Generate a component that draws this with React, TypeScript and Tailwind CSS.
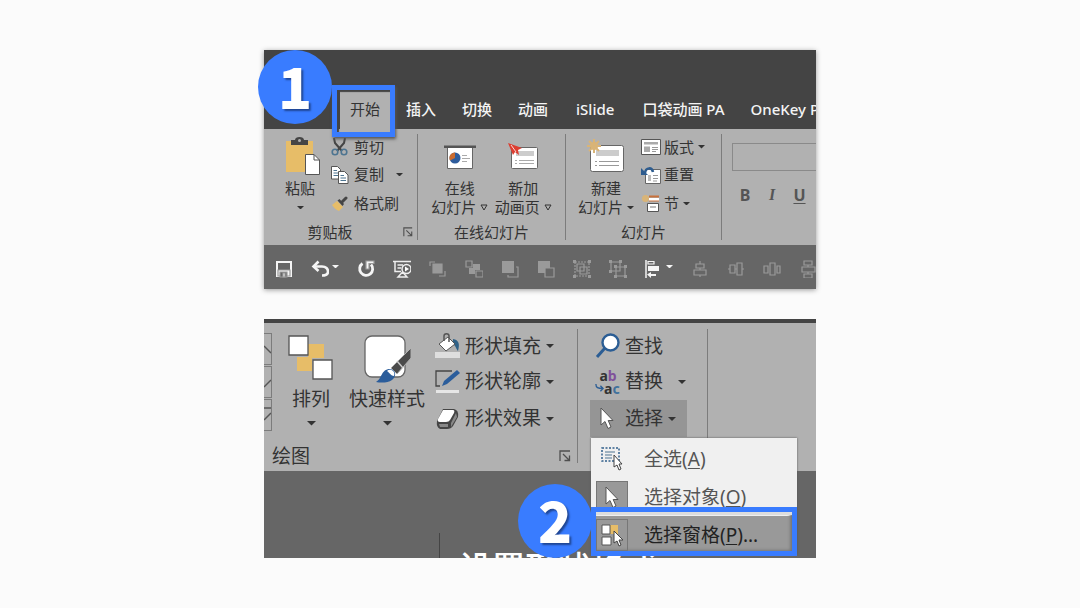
import React from "react";
import clsx from "clsx";

const Caret = ({ className = "w-[7px]" }: { className?: string }) => (
  <svg viewBox="0 0 8 4" className={clsx("shrink-0", className)} fill="currentColor" aria-hidden="true">
    <path d="M0 0H8L4 4Z" />
  </svg>
);

const HollowCaret = () => (
  <svg viewBox="0 0 8 7" className="w-[8px] shrink-0" fill="none" stroke="currentColor" aria-hidden="true">
    <path d="M1 1H7L4 6Z" />
  </svg>
);

const Launcher = ({ label, className = "w-[10px]" }: { label: string; className?: string }) => (
  <button type="button" aria-label={label} className="text-[#4f4f4f]">
    <svg viewBox="0 0 12 12" className={className} fill="none" stroke="currentColor" strokeWidth="1.3">
      <path d="M1 11V1H11M4 4L10 10M10.5 5.5V10.5H5.5" />
    </svg>
  </button>
);

const Pointer = ({ className }: { className: string }) => (
  <svg viewBox="0 0 14 23" className={className} aria-hidden="true">
    <path d="M1 1V18L5 14.5L8 21.5L11 20L8.2 13.5H13Z" fill="#fff" stroke="#555" />
  </svg>
);

/* ---------- ribbon icons, small panel ---------- */

const PasteIcon = () => (
  <svg viewBox="0 0 34 39" className="w-[34px] h-[39px]" aria-hidden="true">
    <path d="M0 4H27V35H0Z" fill="#e7bd68" />
    <path d="M5 8V3H9C9 1 11 0 13.5 0S18 1 18 3H22V8Z" fill="#454545" />
    <circle cx="13.5" cy="3.5" r="1.5" fill="#b1b1b1" />
    <path d="M19.5 17.5H28L33.5 23V37.5H19.5Z" fill="#fff" stroke="#555" />
    <path d="M28 17.5V23H33.5" fill="none" stroke="#555" />
  </svg>
);

const CutIcon = () => (
  <svg viewBox="0 0 17 18" className="w-[17px] h-[18px]" fill="none" aria-hidden="true">
    <path d="M3 0L4 5L11 13M14 0L13 5L6 13" stroke="#454545" strokeWidth="2" />
    <circle cx="4" cy="14" r="2.8" stroke="#4e7591" strokeWidth="1.6" />
    <circle cx="13" cy="14" r="2.8" stroke="#4e7591" strokeWidth="1.6" />
  </svg>
);

const CopyIcon = () => (
  <svg viewBox="0 0 18 18" className="w-[18px] h-[18px]" fill="#fff" stroke="#555" aria-hidden="true">
    <path d="M.5 .5H6.5L9.5 3.5V13H.5Z" />
    <path d="M2.5 4.5H6M2.5 7H7M2.5 9.5H7" stroke="#4e7591" />
    <path d="M7.5 5.5H13.5L17 9V17.5H7.5Z" />
    <path d="M9.5 9.5H13M9.5 12H15M9.5 14.5H15" stroke="#4e7591" />
  </svg>
);

const BrushIcon = () => (
  <svg viewBox="0 0 17 16" className="w-[17px] h-[16px]" aria-hidden="true">
    <path d="M1 9L6 5L12 11L8 15C5 14 3 12 1 9Z" fill="#e7bd68" />
    <path d="M6.5 4.5L8.5 3L13 8L11.5 10Z" fill="#454545" />
    <path d="M11 6L15 2" stroke="#454545" strokeWidth="3" strokeLinecap="round" />
  </svg>
);

const OnlineSlideIcon = () => (
  <svg viewBox="0 0 32 28" className="w-[32px] h-[28px]" aria-hidden="true">
    <path d="M3.5 4H28.5V25.5H3.5Z" fill="#fff" stroke="#666" />
    <path d="M0 2.5H32V5H0Z" fill="#555" />
    <circle cx="11" cy="15" r="5.5" fill="#2d5c9c" />
    <path d="M11 15L11 9.5A5.5 5.5 0 0 0 6 17.5Z" fill="#ca6b2e" />
    <path d="M18 12.5H23M18 15.5H26M18 18.5H23" stroke="#aaa" />
  </svg>
);

const AnimPageIcon = () => (
  <svg viewBox="0 0 31 28" className="w-[31px] h-[28px]" aria-hidden="true">
    <rect x="3.5" y="4.5" width="26" height="21" rx="1" fill="#fff" stroke="#666" />
    <path d="M8 8H26V13H8Z" fill="#ccc" />
    <path d="M7 17.5H9M11 17.5H26M7 20.5H9M11 20.5H26" stroke="#aaa" />
    <path d="M0 0L14 5L10 7L11 12L7 9L5 12Z" fill="#dc3e31" />
    <path d="M3 2L8 9" stroke="#fff" strokeWidth=".8" />
  </svg>
);

const NewSlideIcon = () => (
  <svg viewBox="0 0 38 35" className="w-[38px] h-[35px]" aria-hidden="true">
    <rect x="3.5" y="6.5" width="33" height="26" rx="2" fill="#fff" stroke="#666" />
    <path d="M9 11H32V17H9Z" fill="#ccc" />
    <path d="M8 22.5H10M12 22.5H32M8 26.5H10M12 26.5H32" stroke="#999" />
    <path d="M7 0V14M0 7H14M2 2L12 12M12 2L2 12" stroke="#d9b477" strokeWidth="2" />
    <circle cx="7" cy="7" r="4" fill="#d9b477" />
  </svg>
);

const LayoutIcon = () => (
  <svg viewBox="0 0 20 16" className="w-[20px] h-[16px]" aria-hidden="true">
    <path d="M.5 .5H19.5V15.5H.5Z" fill="#fff" stroke="#555" />
    <path d="M3 3H17V5.5H3ZM3 7.5H9V13H3Z" fill="#aaa" />
    <path d="M11 8.5H17M11 10.5H17M11 12.5H15" stroke="#999" />
  </svg>
);

const ResetIcon = () => (
  <svg viewBox="0 0 20 18" className="w-[20px] h-[18px]" aria-hidden="true">
    <path d="M4.5 3.5H19.5V17.5H4.5Z" fill="#fff" stroke="#666" />
    <path d="M7 9H10V15H7Z" fill="#bbb" />
    <path d="M12 9.5H17M12 12.5H17M12 15H16" stroke="#999" />
    <path d="M12 6C11 1 5 1 4 7" fill="none" stroke="#2d5c8f" strokeWidth="2.5" />
    <path d="M0 2V9H7Z" fill="#2d5c8f" />
  </svg>
);

const SectionIcon = () => (
  <svg viewBox="0 0 20 17" className="w-[20px] h-[17px]" aria-hidden="true">
    <path d="M8 1.5H18" stroke="#c9713b" strokeWidth="2" />
    <path d="M8 3H18V6H8Z" fill="#fff" />
    <path d="M8 6H18" stroke="#c9713b" />
    <circle cx="4.5" cy="3.5" r="3.5" fill="#d9b477" />
    <path d="M6.5 8.5H17.5V16.5H6.5Z" fill="#fff" stroke="#555" />
    <path d="M9 11H15V13H9Z" fill="#bbb" />
  </svg>
);

/* ---------- quick access icons ---------- */

const SaveIcon = () => (
  <g>
    <path d="M2 2H16V16H2Z" fill="none" stroke="#f5f5f5" strokeWidth="2" />
    <path d="M3 10H15V16H3Z" fill="#f5f5f5" />
    <path d="M5 12H12V17H5Z" fill="#666" />
    <path d="M8 13H10V17H8Z" fill="#f5f5f5" />
  </g>
);

const UndoIcon = () => (
  <g fill="none" stroke="#f5f5f5" strokeWidth="2.6">
    <path d="M2 6.500H11C15 6.500 17 9 17 11.500S15 15.500 11 15.500" />
    <path d="M7.500 1.500L2.500 6.500L7.500 11" />
  </g>
);

const RedoIcon = () => (
  <g>
    <path d="M5.5 3.5A6.5 6.5 0 1 0 14 4.5" fill="none" stroke="#f5f5f5" strokeWidth="2.8" />
    <path d="M9 1H17V3.500H12V9H9Z" fill="#f5f5f5" />
  </g>
);

const PresentIcon = () => (
  <g fill="none" stroke="#eee" strokeWidth="1.5">
    <path d="M0 1.5H18M2 2V11.5H8M4.5 5H10M4.5 8H8M5 17H14L9.5 12Z" />
    <circle cx="13.5" cy="9" r="4.5" fill="#666" />
    <path d="M12 6.5V11.5L16 9Z" fill="#fff" stroke="none" />
  </g>
);

const dim = "#9a9a9a";

const disabledIcons: { label: string; art: React.ReactNode }[] = [
  { label: "上移一层", art: <><path d="M4 4H13V13H4Z" fill={dim} /><path d="M1 6V2H6M16 11V16H10" /></> },
  { label: "置于顶层", art: <><path d="M8 4H15V10H8ZM4 8H10V14H4Z" fill={dim} stroke="none" /><path d="M1 1H7V7H1ZM11 11H18V17H11Z" fill="#666" /></> },
  { label: "下移一层", art: <><path d="M1 1H13V13H1Z" fill={dim} stroke="none" /><path d="M15 7H17V17H7V15" /></> },
  { label: "置于底层", art: <><path d="M1 1H13V13H1Z" fill={dim} stroke="none" /><path d="M8 8H17V17H8Z" fill="#666" /></> },
  { label: "组合", art: <><path d="M2 2H16V16H2Z" strokeDasharray="2 1" /><path d="M4 4H11V11H4ZM7 7H14V14H7Z" /><path d="M0 0H3V3H0ZM15 0H18V3H15ZM0 15H3V18H0ZM15 15H18V18H15Z" fill={dim} stroke="none" /></> },
  { label: "取消组合", art: <><path d="M2 2H11V11H2ZM7 7H16V16H7Z" /><path d="M0 0H3V3H0ZM10 0H13V3H10ZM0 10H3V13H0ZM5 5H8V8H5ZM15 5H18V8H15ZM5 15H8V18H5ZM15 15H18V18H15Z" fill={dim} stroke="none" /></> },
];

const alignIcons: { label: string; art: React.ReactNode }[] = [
  { label: "水平居中", art: <path d="M9 1V4M5 4H13V8H5ZM9 8V10M3 10H15V15H3ZM9 15V17" /> },
  { label: "垂直居中", art: <path d="M1 9H3M3 5H8V13H3ZM8 9H10M10 3H15V15H10ZM15 9H17" /> },
  { label: "横向分布", art: <path d="M1 6H5V13H1ZM7 3H12V15H7ZM14 6H17V13H14Z" /> },
  { label: "纵向分布", art: <path d="M5 1H13V5H5ZM9 5V7M3 7H16V12H3ZM9 12V14M5 14H13V18H5Z" /> },
];

const QuickButton = ({ label, caret, children }: { label: string; caret?: boolean; children: React.ReactNode }) => (
  <button
    type="button"
    aria-label={label}
    className={clsx("flex shrink-0 items-center justify-between text-[#f5f5f5]", caret ? "w-[28px]" : "w-[18px]")}
  >
    <svg viewBox="0 0 18 18" className="size-[18px]" fill="none" stroke={dim} strokeWidth="1.2">
      {children}
    </svg>
    {caret && <Caret className="mb-[4px] w-[7px]" />}
  </button>
);

/* ---------- large panel icons ---------- */

const ArrangeIcon = () => (
  <svg viewBox="0 0 46 46" className="w-[46px] h-[46px]" aria-hidden="true">
    <path d="M20 9H36V23H20ZM9 22H24V36H9Z" fill="#e7bd68" />
    <path d="M1 1H20V20H1ZM25 25H44V44H25Z" fill="#fff" stroke="#555" strokeWidth="1.3" />
  </svg>
);

const QuickStyleIcon = () => (
  <svg viewBox="0 0 48 48" className="w-[48px] h-[48px]" aria-hidden="true">
    <rect x="2" y="1" width="40" height="41" rx="7" fill="#fff" stroke="#666" strokeWidth="1.3" />
    <path d="M48 13V23L34 39L28 33Z" fill="#4a4a4a" stroke="#b1b1b1" />
    <path d="M34 26L40 33" stroke="#ccc" strokeWidth="1.5" />
    <path d="M13 47C19 44 18 34 27 34C33 35 34 41 29 45C25 48 18 48 13 47Z" fill="#2b5d9b" />
    <path d="M24 36C27 33 33 36 31 41C28 41 27 38 24 36Z" fill="#fff" />
  </svg>
);

const FillIcon = () => (
  <svg viewBox="0 0 26 26" className="w-[26px] h-[26px]" aria-hidden="true">
    <path d="M0 19H25V25H0Z" fill="#dedede" />
    <path d="M18 6C24 7 25 11 23 18C21 16 21 13 18 11Z" fill="#2f6187" />
    <path d="M4 11L13 4L20 11L11 18Z" fill="#fff" stroke="#555" />
    <path d="M9 8V3C9 0 14 0 14 3V9" fill="none" stroke="#555" strokeWidth="1.5" />
  </svg>
);

const OutlineIcon = () => (
  <svg viewBox="0 0 26 26" className="w-[26px] h-[26px]" aria-hidden="true">
    <path d="M1 21H24V24H1Z" fill="#e6e6e6" />
    <path d="M17 2H1V17H5" fill="none" stroke="#454545" strokeWidth="1.3" />
    <path d="M22 1L25 4L12 15L7 17L9 12Z" fill="#2b5d9b" />
  </svg>
);

const EffectIcon = () => (
  <svg viewBox="0 0 26 26" className="w-[26px] h-[26px]" aria-hidden="true">
    <path d="M8 3H19Q24 4 23 11L18 20Q16 23 12 23H5Q1 21 2 15Z" fill="#454545" />
    <path d="M8 4H18Q20 4 19 7L15 14Q14 16 11 16H5Q2 16 3 13Z" fill="#fff" />
    <path d="M21 7L16 17V21L22 11Z" fill="#888" />
    <path d="M4 18H13V21H5Z" fill="#888" />
  </svg>
);

const FindIcon = () => (
  <svg viewBox="0 0 26 26" className="w-[26px] h-[26px]" fill="none" stroke="#2b5d94" aria-hidden="true">
    <circle cx="15.5" cy="9.5" r="8" fill="#fff" strokeWidth="2.4" />
    <path d="M10 15L2 24" strokeWidth="3" />
  </svg>
);

const ReplaceIcon = () => (
  <span className="flex w-[26px] flex-col text-[14px] leading-[13px] font-bold text-[#333]" aria-hidden="true">
    <span>a<span className="text-[#80519b]">b</span></span>
    <span className="flex">
      <svg viewBox="0 0 10 10" className="w-[9px] shrink-0" fill="none" stroke="#2b5d94" strokeWidth="1.5">
        <path d="M1 0C1 4 3 5 9 5M6 2L9 5L6 8" />
      </svg>
      a<span className="text-[#3f719d]">c</span>
    </span>
  </span>
);

const SelectAllIcon = () => (
  <svg viewBox="0 0 24 24" className="w-[24px] h-[24px]" aria-hidden="true">
    <path d="M2 1H19V14H2Z" fill="none" stroke="#315f8b" strokeWidth="1.5" strokeDasharray="2 1.5" />
    <path d="M5 5H15M5 8H12M5 11H12" stroke="#4e7591" />
    <path d="M14 8V20L17 18L19 23L21 22L19 17H22Z" fill="#fff" stroke="#444" />
  </svg>
);

const PaneIcon = () => (
  <svg viewBox="0 0 24 24" className="w-[24px] h-[24px]" aria-hidden="true">
    <path d="M9 2H18V11H9Z" fill="#e7bd68" />
    <path d="M2 2H10V11H2ZM2 14H11V22H2Z" fill="#fff" stroke="#555" />
    <path d="M14 8V20L17 18L19 23L21 22L19 17H23Z" fill="#fff" stroke="#444" />
  </svg>
);

/* ---------- building blocks ---------- */

const Badge = ({ children, className }: { children: React.ReactNode; className: string }) => (
  <span
    className={clsx(
      "absolute z-20 flex size-[74px] items-center justify-center rounded-full bg-[#397cff] pb-[4px] font-['Noto_Sans_CJK_SC',sans-serif] text-[56px] leading-[56px] font-black text-white text-shadow-[2px_2px_2px_#1f4694]",
      className
    )}
  >
    {children}
  </span>
);

const Group = ({ label, className, children, launcher }: { label?: string; className?: string; children: React.ReactNode; launcher?: string }) => (
  <section className="flex shrink-0 flex-col border-r border-[#7c7c7c] last:border-r-0">
    <div className={clsx("flex flex-1", className)}>{children}</div>
    {label && (
      <footer className={clsx("relative flex h-[16px] items-center justify-center text-[15px]", launcher && "pr-[21px]")}>
        {label}
        {launcher && (
          <span className="absolute right-[4px] flex items-center">
            <Launcher label={launcher} />
          </span>
        )}
      </footer>
    )}
  </section>
);

const BigButton = ({ icon, lines, caret, className }: { icon: React.ReactNode; lines: string[]; caret: React.ReactNode; className?: string }) => (
  <button type="button" className={clsx("flex flex-col items-center self-start text-[15px] leading-[19px]", className)}>
    <span className="flex h-[45px] items-center">{icon}</span>
    <span>{lines[0]}</span>
    <span className="flex h-[19px] items-center gap-[4px] whitespace-nowrap">
      {lines[1]}
      {caret}
    </span>
  </button>
);

const SmallButton = ({ icon, label, caret, wide }: { icon: React.ReactNode; label: string; caret?: boolean; wide?: boolean }) => (
  <button type="button" className="flex h-[29px] items-center text-[15px] whitespace-nowrap first:h-[26px]">
    <span className="flex w-[23px]">{icon}</span>
    {label}
    {caret && <Caret className={wide ? "ml-[12px] w-[7px]" : "ml-[4px] w-[7px]"} />}
  </button>
);

const tabs = ["插入", "切换", "动画", "iSlide", "口袋动画 PA", "OneKey Plus"];

const HomePanel = () => (
  <section className="relative">
    <div className="overflow-hidden bg-[#b1b1b1] shadow-[0_1px_5px_#999]">
      <nav className="flex h-[79px] items-end bg-[#444] pl-[76px]">
        <button type="button" className="h-[40px] shrink-0 bg-[#b1b1b1] pr-[13px] pl-[10px] text-[15px] whitespace-nowrap text-[#333]">
          开始
        </button>
        {tabs.map((tab) => (
          <button
            key={tab}
            type="button"
            className={clsx(
              "h-[40px] shrink-0 text-[15px] font-medium whitespace-nowrap text-[#f4f4f4]",
              tab === "iSlide" ? "px-[15px]" : "px-[13px]"
            )}
          >
            {tab}
          </button>
        ))}
      </nav>

      <div className="flex h-[116px] py-[5px] text-[#333]">
        <Group label="剪贴板" launcher="剪贴板选项" className="w-[153px] pl-[15px]">
          <BigButton icon={<span className="pl-[5px]"><PasteIcon /></span>} lines={["粘贴", ""]} caret={<Caret />} className="w-[42px]" />
          <div className="ml-[10px] flex flex-col">
            <SmallButton icon={<CutIcon />} label="剪切" />
            <SmallButton icon={<CopyIcon />} label="复制" caret wide />
            <SmallButton icon={<BrushIcon />} label="格式刷" />
          </div>
        </Group>
        <Group label="在线幻灯片" className="w-[147px] px-[10px]">
          <BigButton icon={<OnlineSlideIcon />} lines={["在线", "幻灯片"]} caret={<HollowCaret />} className="w-[64px]" />
          <BigButton icon={<AnimPageIcon />} lines={["新加", "动画页"]} caret={<HollowCaret />} className="w-[64px]" />
        </Group>
        <Group label="幻灯片" className="w-[155px] px-[11px]">
          <BigButton icon={<NewSlideIcon />} lines={["新建", "幻灯片"]} caret={<Caret />} className="w-[58px]" />
          <div className="ml-[6px] flex flex-col">
            <SmallButton icon={<LayoutIcon />} label="版式" caret />
            <SmallButton icon={<ResetIcon />} label="重置" />
            <SmallButton icon={<SectionIcon />} label="节" caret />
          </div>
        </Group>
        <Group className="pt-[9px] pl-[10px]">
          <div className="flex flex-col">
            <input aria-label="字体" className="h-[28px] w-[140px] border border-[#8a8a8a] bg-transparent px-2 text-[15px]" />
            <div className="flex pt-[13px] text-[16px] leading-[22px] font-bold text-[#555]">
              <button type="button" aria-label="加粗" className="w-[26px]">B</button>
              <button type="button" aria-label="倾斜" className="w-[28px] font-['Liberation_Serif',serif] italic">I</button>
              <button type="button" aria-label="下划线" className="w-[27px] underline underline-offset-2">U</button>
            </div>
          </div>
        </Group>
      </div>

      <div className="flex h-[44px] items-center gap-[18px] bg-[#666] pt-[3px] pl-[11px]" role="toolbar" aria-label="快速访问工具栏">
        <QuickButton label="保存"><SaveIcon /></QuickButton>
        <QuickButton label="撤消" caret><UndoIcon /></QuickButton>
        <QuickButton label="恢复"><RedoIcon /></QuickButton>
        <QuickButton label="从头开始"><PresentIcon /></QuickButton>
        {disabledIcons.map(({ label, art }) => (
          <QuickButton key={label} label={label}>{art}</QuickButton>
        ))}
        <QuickButton label="左对齐" caret>
          <path d="M1 0V18" stroke="#f5f5f5" strokeWidth="1.5" />
          <path d="M3 1.5H9V4H3Z" stroke="#f5f5f5" />
          <path d="M3 6H14V11H3ZM2 14.5L6 12V14H11V16H6V18Z" fill="#f5f5f5" stroke="none" />
        </QuickButton>
        {alignIcons.map(({ label, art }) => (
          <QuickButton key={label} label={label}>{art}</QuickButton>
        ))}
      </div>
    </div>
    <span className="pointer-events-none absolute top-[35px] left-[68px] h-[52px] w-[63px] border-[5px] border-[#397cff] shadow-[1px_2px_3px_#555,inset_2px_2px_1px_#444]" />
    <Badge className="top-0 left-[-6px]">1</Badge>
  </section>
);

const LargeButton = ({ icon, label, className }: { icon: React.ReactNode; label: string; className: string }) => (
  <button type="button" className={clsx("flex shrink-0 flex-col items-center self-start pt-[6px] text-[19px] leading-[24px] whitespace-nowrap", className)}>
    <span className="flex h-[52px] items-start">{icon}</span>
    {label}
    <Caret className="mt-[10px] w-[9px]" />
  </button>
);

const RowButton = ({ icon, label, className, gap = "ml-[5px]" }: { icon: React.ReactNode; label: string; className?: string; gap?: string }) => (
  <button type="button" className={clsx("flex h-[37px] items-center text-[19px] whitespace-nowrap first:h-[34px]", className)}>
    <span className="flex w-[30px]">{icon}</span>
    {label}
    {gap && <Caret className={clsx("w-[8px]", gap)} />}
  </button>
);

const scrollButtons = [
  { label: "上一行", mark: "M0 12L7 19" },
  { label: "下一行", mark: "M0 20L7 13" },
  { label: "其他", mark: "M0 8H7M0 20L7 13" },
];

const MenuItem = ({ icon, label, hotkey, suffix = ")", pressed, className }: { icon: React.ReactNode; label: string; hotkey: string; suffix?: string; pressed?: boolean; className?: string }) => (
  <button
    type="button"
    role="menuitem"
    className={clsx("flex h-[38px] w-full items-center pl-[5px] text-[19px] whitespace-nowrap", className)}
  >
    <span className={clsx("mr-[16px] flex h-[32px] w-[32px] items-center justify-center border", pressed ? "border-[#777] bg-[#999]" : "border-transparent")}>
      {icon}
    </span>
    <span>
      {label}(<u className="underline-offset-2">{hotkey}</u>{suffix}
    </span>
  </button>
);

const SelectMenu = () => (
  <div role="menu" className="absolute top-[119px] left-[327px] z-10 w-[206px] bg-[#f0f0f0] pt-[2px] text-[#555] shadow-[0_0_2px_#555]">
    <MenuItem icon={<SelectAllIcon />} label="全选" hotkey="A" />
    <MenuItem icon={<Pointer className="h-[23px] w-[14px]" />} label="选择对象" hotkey="O" pressed />
    <MenuItem icon={<PaneIcon />} label="选择窗格" hotkey="P" suffix=")..." pressed className="bg-[#999] text-[#222]" />
    <span className="pointer-events-none absolute right-0 bottom-[-2px] left-0 h-[49px] border-[5px] border-[#397cff] shadow-[inset_0_3px_0_#ddd,inset_-2px_-1px_3px_#777]" />
  </div>
);

const DrawingPanel = () => (
  <section className="relative">
    <div className="overflow-hidden bg-[#b1b1b1]">
      <div className="flex h-[152px] border-t-4 border-[#444] pt-[6px] pb-[8px] text-[#333]">
        <section className="flex w-[314px] shrink-0 flex-col border-r border-[#7c7c7c]">
          <div className="flex flex-1">
            <div className="flex w-[8px] flex-col gap-[1px] self-start pt-[4px]">
              {scrollButtons.map(({ label, mark }) => (
                <button key={label} type="button" aria-label={label} className="h-[32px] border border-l-0 border-[#7c7c7c]">
                  <svg viewBox="0 0 7 30" className="h-full w-full" fill="none" stroke="#555" strokeWidth="1.5">
                    <path d={mark} />
                  </svg>
                </button>
              ))}
            </div>
            <LargeButton icon={<ArrangeIcon />} label="排列" className="ml-[14px] w-[50px]" />
            <LargeButton icon={<QuickStyleIcon />} label="快速样式" className="ml-[13px] w-[76px]" />
            <div className="ml-[10px] flex flex-col">
              <RowButton icon={<FillIcon />} label="形状填充" />
              <RowButton icon={<OutlineIcon />} label="形状轮廓" />
              <RowButton icon={<EffectIcon />} label="形状效果" />
            </div>
          </div>
          <footer className="flex h-[14px] items-center justify-between pr-[6px] pl-[8px] text-[19px] leading-[14px]">
            绘图
            <Launcher label="设置形状格式" className="w-[12px]" />
          </footer>
        </section>
        <section className="flex w-[130px] shrink-0 flex-col items-start border-r border-[#7c7c7c] pl-[12px]">
          <RowButton icon={<FindIcon />} label="查找" gap="" className="pl-[5px]" />
          <RowButton icon={<ReplaceIcon />} label="替换" gap="ml-[15px]" className="pl-[5px]" />
          <RowButton
            icon={<Pointer className="ml-[5px] h-[23px] w-[14px]" />}
            label="选择"
            className="w-[97px] bg-[#959595] pl-[5px]"
          />
        </section>
      </div>
      <div className="flex h-[87px] bg-[#666] pl-[175px]">
        <span className="mt-[62px] w-px shrink-0 bg-[#444]" />
        <h2 className="mt-[80px] ml-[19px] text-[33px] leading-[33px] font-medium whitespace-nowrap text-white">设置形状格式</h2>
      </div>
    </div>
    <SelectMenu />
    <Badge className="bottom-0 left-[254px]">2</Badge>
  </section>
);

export default function App() {
  return (
    <main className="min-h-screen bg-[#fbfbfb] px-4 pt-[50px] font-['Noto_Sans','Noto_Sans_CJK_SC',sans-serif]">
      <div className="mx-auto flex max-w-[552px] flex-col gap-[30px]">
        <HomePanel />
        <DrawingPanel />
      </div>
    </main>
  );
}
